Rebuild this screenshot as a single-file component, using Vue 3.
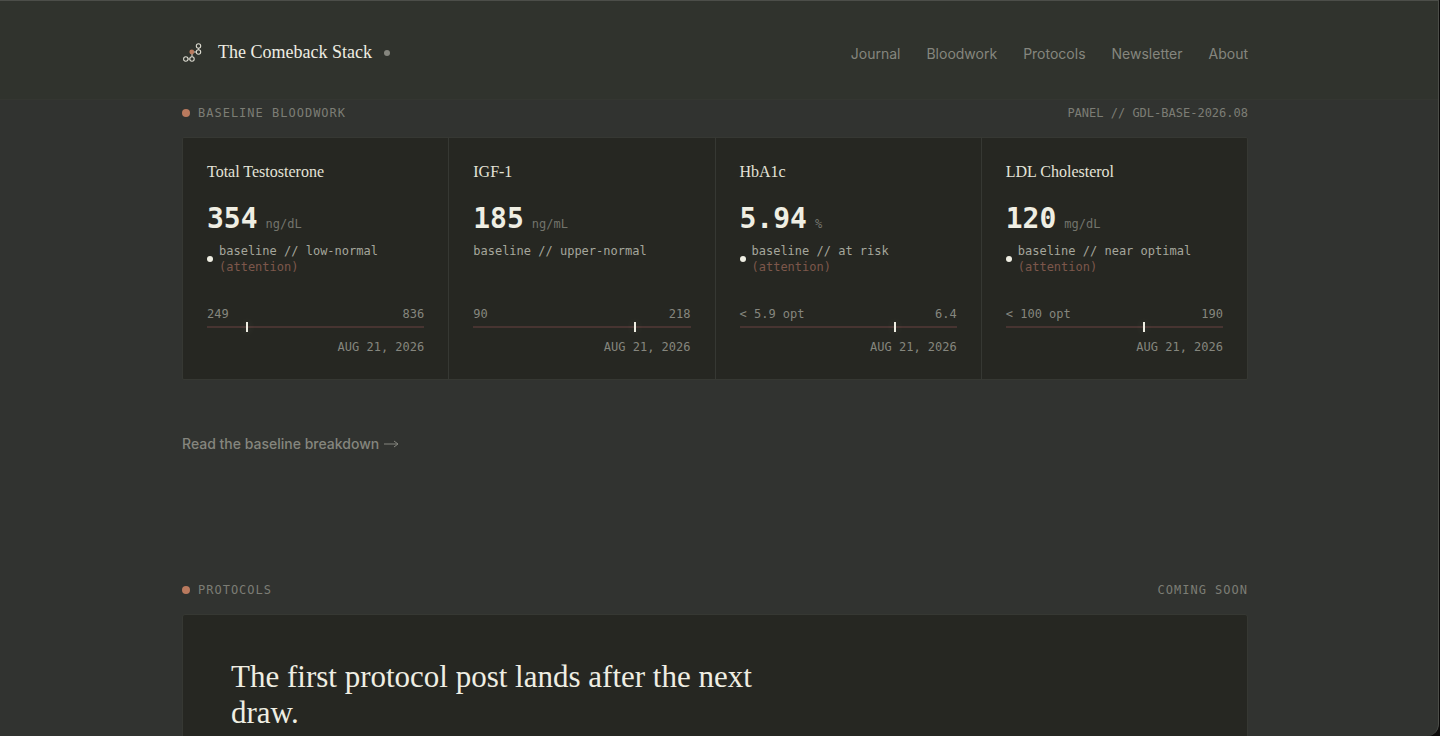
<script setup>
const links = ['Journal', 'Bloodwork', 'Protocols', 'Newsletter', 'About']

const markers = [
  { name: 'Total Testosterone', value: '354', unit: 'ng/dL', status: 'low-normal', attention: true, low: '249', high: '836', position: 18 },
  { name: 'IGF-1', value: '185', unit: 'ng/mL', status: 'upper-normal', attention: false, low: '90', high: '218', position: 74 },
  { name: 'HbA1c', value: '5.94', unit: '%', status: 'at risk', attention: true, low: '< 5.9 opt', high: '6.4', position: 71 },
  { name: 'LDL Cholesterol', value: '120', unit: 'mg/dL', status: 'near optimal', attention: true, low: '< 100 opt', high: '190', position: 63 },
]
</script>

<template>
  <div class="window">
    <header class="site-header">
      <div class="container header-row">
        <a class="brand" href="#">
          <svg class="logo" viewBox="0 0 20 20" aria-hidden="true">
            <g fill="none" stroke="#d9d8cd" stroke-width="1.1">
              <path d="M6.100 17h1.600M10 14.800V10M10 10h4.200M16.500 7.700V6.300" />
              <circle cx="3.8" cy="17" r="2.2" />
              <circle cx="10" cy="17" r="2.2" />
              <circle cx="16.5" cy="10" r="2.2" />
              <circle cx="16.5" cy="4" r="2.2" />
            </g>
            <circle cx="9.8" cy="10" r="2.4" fill="#b97a5e" />
          </svg>
          <span class="brand-name">The Comeback Stack</span>
          <span class="brand-dot"></span>
        </a>
        <nav class="nav" aria-label="Main">
          <a v-for="link in links" :key="link" href="#">{{ link }}</a>
        </nav>
      </div>
    </header>

    <main>
      <section class="container bloodwork">
        <div class="section-head">
          <h2 class="eyebrow"><span class="dot"></span>BASELINE BLOODWORK</h2>
          <span>PANEL // GDL-BASE-2026.08</span>
        </div>
        <div class="grid">
          <article v-for="m in markers" :key="m.name" class="card">
            <h3 class="name">{{ m.name }}</h3>
            <p class="reading"><strong>{{ m.value }}</strong><span>{{ m.unit }}</span></p>
            <div class="status">
              <span v-if="m.attention" class="status-dot"></span>
              <p>
                baseline // {{ m.status }}
                <span v-if="m.attention" class="attention">(attention)</span>
              </p>
            </div>
            <div class="range"><span>{{ m.low }}</span><span>{{ m.high }}</span></div>
            <div class="track"><span class="tick" :style="{ left: m.position + '%' }"></span></div>
            <time class="date" datetime="2026-08-21">AUG 21, 2026</time>
          </article>
        </div>
        <a class="more" href="#">
          Read the baseline breakdown
          <svg class="arrow" viewBox="0 0 16 10" aria-hidden="true">
            <path d="M1 5h14M11 2l4 3-4 3" fill="none" stroke="currentColor" stroke-width="1" />
          </svg>
        </a>
      </section>

      <section class="container protocols">
        <div class="section-head">
          <h2 class="eyebrow"><span class="dot"></span>PROTOCOLS</h2>
          <span class="soon">COMING SOON</span>
        </div>
        <div class="feature">
          <h3>The first protocol post lands after the next draw.</h3>
        </div>
      </section>
    </main>
  </div>
</template>

<style>
body {
  background: #0c0b0a;
}
</style>

<style scoped>
* {
  box-sizing: border-box;
}
h2,
h3,
p {
  margin: 0;
  font-weight: 400;
}
a {
  color: inherit;
  text-decoration: none;
}
.window {
  height: 100vh;
  margin-right: 1px;
  overflow: hidden;
  background: #313330;
  border: solid #4c4e49;
  border-width: 1px 1px 0 0;
  border-bottom-right-radius: 12px;
  font-family: Inter, sans-serif;
  color: #85867e;
}
.container {
  width: calc(100% - 48px);
  max-width: 1066px;
  margin: 0 auto;
}
.site-header,
main {
  padding-right: 8px;
}
.site-header {
  background: #30332d;
  border-bottom: 1px solid #343631;
}
.header-row {
  display: flex;
  align-items: center;
  justify-content: space-between;
  height: 98px;
  padding-top: 4px;
}
.brand {
  display: flex;
  align-items: center;
}
.logo {
  width: 20px;
  height: 20px;
}
.brand-name {
  margin-left: 16px;
  font-family: "Liberation Serif", serif;
  font-size: 18px;
  line-height: 24px;
  color: #eeede2;
}
.brand-dot {
  width: 6px;
  height: 6px;
  margin-top: 2px;
  margin-left: 12px;
  border-radius: 50%;
  background: #85867e;
}
.nav {
  display: flex;
  gap: 26px;
  padding-top: 4px;
  font-size: 14px;
  line-height: 20px;
}
.section-head {
  display: flex;
  align-items: center;
  justify-content: space-between;
  height: 16px;
  font-family: "DejaVu Sans Mono", monospace;
  font-size: 12px;
  line-height: 16px;
  color: #7c7d75;
}
.eyebrow {
  display: flex;
  align-items: center;
  gap: 8px;
  font-size: 12px;
  letter-spacing: 1px;
}
.soon {
  letter-spacing: 1px;
}
.dot {
  width: 8px;
  height: 8px;
  border-radius: 50%;
  background: #b97a5e;
}
.bloodwork {
  padding-top: 5px;
}
.grid {
  display: grid;
  grid-template-columns: repeat(4, 1fr);
  gap: 1px;
  margin-top: 16px;
  border: 1px solid #363833;
  border-radius: 2px;
  background: #363833;
  overflow: hidden;
}
.card {
  padding: 24px;
  background: #262722;
  font-family: "DejaVu Sans Mono", monospace;
  font-size: 12px;
  line-height: 16px;
}
.name {
  font-family: "Liberation Serif", serif;
  font-size: 16px;
  line-height: 20px;
  color: #e4e3d8;
}
.reading {
  display: flex;
  align-items: baseline;
  gap: 8px;
  margin-top: 20px;
  line-height: 34px;
  color: #73746c;
}
.reading strong {
  font-size: 28px;
  font-weight: 700;
  color: #efeee3;
}
.status {
  display: flex;
  align-items: center;
  gap: 6px;
  height: 32px;
  margin-top: 2px;
  color: #a5a69c;
}
.status p {
  align-self: flex-start;
}
.status-dot {
  width: 6px;
  height: 6px;
  border-radius: 50%;
  background: #efeee3;
}
.attention {
  display: block;
  color: #7d574b;
}
.range {
  display: flex;
  justify-content: space-between;
  margin-top: 31px;
}
.track {
  position: relative;
  height: 2px;
  margin-top: 4px;
  background: #473431;
}
.tick {
  position: absolute;
  top: -4px;
  width: 2px;
  height: 10px;
  background: #efeee3;
  box-shadow: 0 0 8px rgba(239, 238, 227, 0.2);
}
.date {
  display: block;
  margin-top: 11px;
  text-align: right;
}
.more {
  display: inline-flex;
  align-items: center;
  gap: 4px;
  margin-top: 54px;
  font-size: 14px;
  font-weight: 500;
  line-height: 20px;
}
.arrow {
  width: 16px;
  height: 10px;
}
.protocols {
  padding-top: 128px;
}
.feature {
  margin-top: 16px;
  padding: 44px 48px;
  border: 1px solid #363833;
  border-radius: 3px;
  background: #262722;
}
.feature h3 {
  max-width: 560px;
  font-family: "Liberation Serif", serif;
  font-size: 31px;
  line-height: 36px;
  color: #efeee3;
}
</style>
